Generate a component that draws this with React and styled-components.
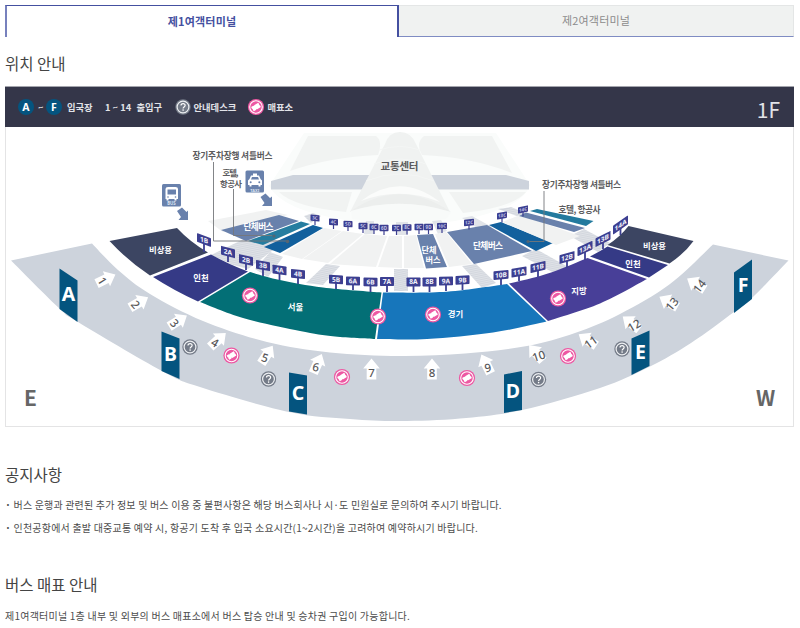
import React from "react";
import styled, { createGlobalStyle } from "styled-components";

const Global = createGlobalStyle`
  * { box-sizing: border-box; }
  body { margin: 0; background: #fff; }
  body, button { font-family: "Noto Sans CJK KR", "Noto Sans", sans-serif; }
`;

const Page = styled.main`
  width: 800px;
  height: 628px;
  overflow: hidden;
  padding: 5px 6px 0 5px;
  color: #4c4c4c;
`;

const TabList = styled.div`
  display: grid;
  grid-template-columns: 394px 1fr;
  height: 32px;
`;

const Tab = styled.button`
  margin: 0;
  padding: 0 0 2px;
  border-radius: 0;
  font-size: 11px;
  letter-spacing: 0.2px;
  font-weight: ${(p) => (p.$active ? 700 : 400)};
  color: ${(p) => (p.$active ? "#44509f" : "#8c8c8c")};
  background: ${(p) => (p.$active ? "#fff" : "#f0f2f1")};
  border-style: solid;
  border-color: ${(p) => (p.$active ? "#4450a0" : "#e4e6e6")};
  border-width: ${(p) => (p.$active ? "1px 2px 0" : "1px 1px 1px 0")};
  border-left-color: #7781bd;
  border-bottom-color: #7f8cc3;
`;

const Heading = styled.h2`
  margin: ${(p) => p.$top}px 0 0;
  height: 24px;
  line-height: 22px;
  font-size: 15.5px;
  font-weight: 400;
  color: #444;
`;

const MapCard = styled.section`
  margin-top: 10px;
  height: 341px;
  border: 1px solid #e4e4e5;
  border-top: 0;
`;

const Legend = styled.header`
  display: flex;
  align-items: center;
  height: 41px;
  margin: 0 -1px;
  padding: 0 14px 0 13px;
  background: #343649;
  border-top: 1px solid #a4a5ad;
  color: #e2e3e8;
  font-size: 9.3px;
`;

const LegendText = styled.span`
  margin: 0 ${(p) => p.$right || 0}px 0 ${(p) => p.$left || 0}px;
  width: ${(p) => p.$width}px;
  white-space: nowrap;
  font-weight: 700;
`;

const Floor = styled.span`
  margin-left: auto;
  font-size: 21px;
  line-height: 30px;
  padding-top: 3px;
  font-weight: 400;
`;

const Letter = styled.span`
  width: 16px;
  height: 16px;
  border-radius: 50%;
  background: #04547f;
  color: #fff;
  font: 700 10.5px/16px "Noto Sans", sans-serif;
  text-align: center;
`;

const IconSvg = styled.svg`
  width: 18px;
  height: 18px;
  flex: none;
`;

const MapSvg = styled.svg`
  display: block;
  width: 787px;
  height: 298px;
`;

const Notes = styled.ul`
  list-style: none;
  margin: 6px 0 0;
  padding: 0;
`;

const Note = styled.li`
  display: flex;
  height: 23px;
  align-items: center;
  font-size: 10px;
  letter-spacing: ${(p) => p.$spacing}px;
  white-space: nowrap;
  &::before { content: "·"; width: 8.5px; flex: none; font-weight: 700; }
`;

const Paragraph = styled.p`
  margin: 7px 0 0;
  height: 23px;
  line-height: 23px;
  font-size: 10px;
  letter-spacing: 0.23px;
  white-space: nowrap;
`;

/* Smooth path segment through a list of points. */
function curve(pts, start = "M") {
  let d = `${start}${pts[0][0]} ${pts[0][1]}`;
  for (let i = 0; i < pts.length - 1; i++) {
    const a = pts[i - 1] || pts[i];
    const b = pts[i];
    const c = pts[i + 1];
    const e = pts[i + 2] || c;
    d += `C${b[0] + (c[0] - a[0]) / 6} ${b[1] + (c[1] - a[1]) / 6} ${c[0] - (e[0] - b[0]) / 6} ${c[1] - (e[1] - b[1]) / 6} ${c[0]} ${c[1]}`;
  }
  return d;
}
const ribbon = (top, bottom) => curve(top) + curve(bottom, "L") + "Z";

const concourse = ribbon(
  [[92, 244.5], [118, 271], [150, 295], [203, 322], [267, 343], [330, 353.5], [400, 357], [465, 354.5], [527, 347], [575, 334], [620, 315], [670, 285], [713, 245.5]],
  [[788.5, 261.5], [752, 299], [734, 313], [691, 344], [650, 367.5], [600, 389], [522, 411], [460, 419.5], [400, 422], [350, 420], [289, 413], [200, 388], [162, 372], [78, 323], [60, 310], [11, 261.5]]
);

const zones = [
  { fill: "#3c4562", d: "M109.500 242L177 229Q190 243 208 253.500L150 276.500Q128 262 109.500 242Z" },
  { fill: "#353a86", d: "M153 278L211 255.500Q228 265 248 272.500L198 302.500Q173 291 153 278Z" },
  { fill: "#036f76", d: ribbon([[250, 273], [280, 281], [323, 288.5], [381.5, 293.5]], [[375, 340], [335, 337.5], [300, 332], [243, 319], [200, 303]]) },
  { fill: "#1776bb", d: ribbon([[383, 293.5], [427, 293.5], [460, 291.5], [507, 285]], [[546.5, 322.5], [493, 333.5], [427, 340], [377, 340]]) },
  { fill: "#483f98", d: ribbon([[509, 284.5], [540, 277], [563, 269], [587.5, 259]], [[647, 280], [600, 304.5], [548, 322]]) },
  { fill: "#353a86", d: "M590 257.5Q599 253 607.5 247.5L668 266L649 278.5Z" },
  { fill: "#3c4562", d: "M628.5 227L693.5 242Q685 254 669.5 264.5L607.5 246Q620 238 628.5 227Z" },
];

const gates = [
  ["A", 59.5, 269.5, 77.5, 281.5, 323, 310],
  ["B", 161.5, 332.5, 179.5, 339.5, 380, 372],
  ["C", 289, 373.5, 307, 376.5, 415.5, 412.5],
  ["D", 504, 375.5, 522, 372, 411, 414],
  ["E", 631.5, 339.5, 649.5, 331.5, 367, 376],
  ["F", 734, 273.5, 752, 260.5, 300, 314],
];

/* label, centre x, centre y, arrow angle, numeral angle */
const exits = [
  ["1", 106, 280, 64, 58], ["2", 139, 303.5, 60, 50], ["3", 178, 322, 58, 48], ["4", 218, 341, 48, 30],
  ["5", 267, 355.5, 33, 18], ["6", 317.5, 364.5, 24, 12], ["7", 371.5, 370, 0, 0], ["8", 432, 370, 0, 0],
  ["9", 486, 365, -26, -12], ["10", 536, 354, -41, -18], ["11", 587.5, 341, -57, -36], ["12", 631, 324, -52, -30],
  ["13", 668.5, 303, -60, -50], ["14", 696, 285, -58, -52],
];

const stops = [
  ["1B", 204, 241, 20, 253], ["2A", 228, 253, 15, 263], ["2B", 246, 261, 13, 271], ["3B", 263, 266.5, 10, 277],
  ["4A", 279.5, 271, 8, 281], ["4B", 298, 275, 5, 285], ["5B", 336, 280.5, 3, 290], ["6A", 353, 282, 1, 291],
  ["6B", 370.5, 283, 1, 293], ["7A", 387, 282.5, 0, 293], ["8A", 413.5, 283, 0, 293], ["8B", 429.5, 283, 0, 293],
  ["9A", 446, 282, -1, 292], ["9B", 462.5, 281, -3, 291], ["10B", 501, 276, -5, 286], ["11A", 519, 273, -9, 282],
  ["11B", 538, 268, -13, 278], ["12B", 567, 258.5, -16, 269], ["13A", 585, 249.5, -24, 261],
  ["13B", 603, 240, -27, 250], ["14A", 620.5, 226, -35, 236],
];

const innerStops = [
  ["3C", 315, 219, 5], ["4C", 333.5, 223, 3], ["5D", 348, 225, 2], ["5C", 363, 227, 1], ["6C", 374, 228, 0],
  ["6D", 384, 229, 0], ["7C", 396.5, 229, 0], ["8C", 407, 228.5, 0], ["9C", 419, 228, 0], ["9D", 428.5, 228, 0],
  ["10C", 442, 227, -2], ["12C", 469, 223.5, -6], ["13C", 502, 216.5, -10], ["14C", 523, 210.5, -12],
];

const zoneLabels = [
  ["비상용", 160.5, 251, 23], ["인천", 201, 279, 15.5], ["서울", 295.5, 307.5, 15.5], ["경기", 455.5, 315, 15.5],
  ["지방", 579, 291.5, 15.5], ["인천", 633, 264.5, 15.5], ["비상용", 654.5, 246.5, 23],
];

const tickets = [[250, 296.5], [378, 317.5], [433, 315.5], [558, 299.5], [231.5, 356.5], [342, 378], [467, 379], [568, 357]];
const desks = [[190, 348], [268.5, 380], [538.5, 380.5], [622, 350]];

function Desk({ x, y }) {
  return (
    <g transform={`translate(${x} ${y})`}>
      <circle r="7.7" fill="#747b88" />
      <circle r="5.9" fill="none" stroke="#eef0f3" strokeWidth="1.2" />
      <path d="M-2-1.4C-2-4.2 2.4-3.9 2.1-1.5 2 0 .1 0 .1 1.5" fill="none" stroke="#fff" strokeWidth="1.2" />
      <circle cx=".1" cy="3.1" r=".8" fill="#fff" />
    </g>
  );
}

function Ticket({ x, y }) {
  return (
    <g transform={`translate(${x} ${y})`}>
      <circle r="8.1" fill="#ed58a3" />
      <circle r="6.3" fill="none" stroke="#fff" strokeWidth="1.1" />
      <path transform="rotate(-32)" d="M-4.200-2.500H-1.600L-1.100-1.800-.600-2.500H4.200V-.7Q3.300 0 4.200 .7V2.500H-.600L-1.100 1.800-1.600 2.500H-4.200V.7Q-3.300 0-4.200-.7Z" fill="#fff" />
    </g>
  );
}

const MapText = styled.text`
  font-family: "Noto Sans CJK KR", sans-serif;
  font-size: ${(p) => p.$size || 8.7}px;
  font-weight: 700;
  fill: ${(p) => p.$fill || "#5b5b5d"};
  text-anchor: middle;
`;

const GateText = styled.text`
  font-family: "Noto Sans", sans-serif;
  font-size: ${(p) => p.$size}px;
  font-weight: ${(p) => p.$weight || 700};
  fill: ${(p) => p.$fill || "#fff"};
  text-anchor: middle;
`;

function Exit({ label, x, y, angle, turn }) {
  return (
    <g transform={`translate(${x} ${y}) rotate(${angle})`}>
      <path d="M0-10.500L8.300-.5H4.800V10.500H-4.800V-.5H-8.300Z" fill="#fff" />
      <g transform={`translate(0 4) rotate(${turn - angle})`}>
        <GateText $size={11.5} $weight={500} $fill="#58585a" y="4.200">{label}</GateText>
      </g>
    </g>
  );
}

function Stop({ label, x, y, angle, foot, small }) {
  const w = small ? (label.length > 2 ? 10 : 9) : label.length > 2 ? 15 : 14;
  const h = small ? 6.4 : 8.8;
  return (
    <g>
      <path d={`M${x} ${y}V${foot}`} stroke="#3c3f91" strokeWidth={small ? 1.2 : 1.8} />
      <g transform={`translate(${x} ${y}) skewY(${angle})`}>
        <rect x={-w / 2} y={-h / 2} width={w} height={h} rx=".7" fill="#3c3f91" />
        <GateText $size={small ? 4.5 : 6.6} $fill={small ? "#c1c3e5" : "#f2f2fa"} y={small ? 1.6 : 2.4}>{label}</GateText>
      </g>
    </g>
  );
}

function TransportCenter() {
  return (
    <g>
      <path d="M304 134H496L530 186Q522 211 455 222Q400 230 345 221Q282 211 269 187Z" fill="#fafcfb" />
      <path d="M308 137H376Q383 142 378 156Q330 158 290 172Z" fill="#f1f3f2" />
      <path d="M424 137H492L512 174Q471 158 422 156Q415 144 424 137Z" fill="#f1f3f2" />
      <path d="M279 193H352L346 213Q294 208 279 193Z" fill="#f1f3f2" />
      <path d="M449 193H526Q514 208 463 214Z" fill="#f1f3f2" />
      <path d="M271 182L293 176H506L529 182V190.500H271Z" fill="#cdd3dc" />
      <path d="M400 133Q389 133 385 145L350 213Q374 208 400 208Q426 208 450 213L416 145Q411 133 400 133Z" fill="#f0f2f1" />
      <path d="M366 182Q400 168 434 182M374 165Q400 155 426 165M379 151Q400 144 420 151" fill="none" stroke="#f4f6f5" strokeWidth="1" />
      <path d="M361 202Q400 172 440 203Q400 187 361 202Z" fill="#fbfcfb" />
      <path d="M351 212Q400 178 451 213Q400 197 351 212Z" fill="#eceeed" />
      <path d="M351 212Q400 197 451 213L446 220Q400 227 352 220Z" fill="#f8faf9" />
    </g>
  );
}

function Parking() {
  return (
    <g>
      <path d="M208 222L266 211 288 216 223 233Z" fill="#f1f2f2" />
      <path d="M211 256L248 238 285 242 248 270 233 266Z" fill="url(#hatch)" />
      <path d="M304 217L313 214 321 217 311 224Z M283 258L270 253 255 270 268 278Z" fill="url(#hatch)" />
      <path d="M326 265L340 267 323 286 306 284Z" fill="url(#hatch)" />
      <path d="M394 270H408V292H394Z" fill="url(#hatch)" />
      <path d="M462 267L476 265 496 284 482 289Z" fill="url(#hatch)" />
      <path d="M522 257L536 250 570 269 556 275Z" fill="url(#hatch)" />
      <path d="M570 237L584 230 610 244 598 253Z M498 210L511 208 528 215 522 219Z" fill="url(#hatch)" />
      <path d="M462 219L472 217 492 228 480 231Z M366 222H374V235H364ZM396 223H408V236H396ZM432 222L441 221 447 232 438 235Z" fill="#e1e4e9" />
      <path d="M221 231L279 216 299 222 246 242Z" fill="#6981ac" />
      <path d="M248 242L301 222.5 310 225 263 246Z" fill="#267da0" />
      <path d="M264 248L313 226 323 229 280 254Z" fill="#12609d" />
      <path d="M324 229L342 232 302 260 282 255Z" fill="#f1f2f2" />
      <path d="M343 232L363 235 328 264 303 260Z" fill="#f1f2f2" />
      <path d="M365 235L387 237 376 268 330 265Z" fill="#f1f2f2" />
      <path d="M389 237L402 237 402 269 378 268Z" fill="#f1f2f2" />
      <path d="M404 237L416 236 424 269 404 269Z" fill="#f1f2f2" />
      <path d="M417 236L433 235 447 268 426 269.5Z" fill="#6981ac" />
      <path d="M435 235L446 233 472 265 449 268Z" fill="#f1f2f2" />
      <path d="M447 233L487 226 532 252 474 265Z" fill="#6981ac" />
      <path d="M489 226L501 223 553 244 536 252Z" fill="#12609d" />
      <path d="M502 223L520 216 580 237 556 246Z" fill="#f1f2f2" />
      <path d="M519 217L526 213.5 585 229 574 233Z" fill="#6981ac" />
      <path d="M530 212L537 210 593.5 222 586 227Z" fill="#237a9e" />
    </g>
  );
}

function BusSign() {
  return (
    <g>
      <rect x="162" y="185" width="19" height="22.5" rx="1.5" fill="#6981ac" />
      <path d="M168 188H175.5Q178 188 178 190V200H176.5V201.5H174.5V200H168.5V201.5H166.5V200H165.5V190Q165.5 188 168 188ZM167.5 190.5V195.5H176V190.5Z" fill="#fff" fillRule="evenodd" />
      <circle cx="168" cy="198" r=".8" fill="#6981ac" />
      <circle cx="175.5" cy="198" r=".8" fill="#6981ac" />
      <GateText $size={4.3} $fill="#dbe4f0" x="171.5" y="206.3">BUS</GateText>
      <path d="M177 212L182 208.500 186.500 213 188 211.500V221H178.500L181 218Z" fill="#6981ac" />
    </g>
  );
}

function TaxiSign() {
  return (
    <g>
      <rect x="245.5" y="171.5" width="18.5" height="22" rx="1.5" fill="#6981ac" />
      <path d="M253 174.5H257V176.5H259L260.5 180 262 181.5V186H260.5V187.5H258.5V186H251.5V187.5H249.5V186H248V181.5L249.5 180 251 176.5H253ZM252 178L251 180.5H259L258 178Z" fill="#fff" fillRule="evenodd" />
      <circle cx="250.7" cy="183.3" r="1" fill="#6981ac" />
      <circle cx="259.3" cy="183.3" r="1" fill="#6981ac" />
      <GateText $size={4} $fill="#dbe4f0" x="254.8" y="192.5">TAXI</GateText>
      <path d="M260.500 198L265.500 194.500 270 199 272 197.500V207H262L264.500 204Z" fill="#6981ac" />
    </g>
  );
}

function TerminalMap() {
  return (
    <MapSvg viewBox="6 128 787 298" role="img" aria-label="1F">
      <defs>
        <pattern id="hatch" width="3" height="2" patternUnits="userSpaceOnUse" patternTransform="rotate(-12)">
          <rect width="3" height="2" fill="#dfe2e7" />
          <path d="M0 .5H3" stroke="#cbd0d8" strokeWidth=".6" />
        </pattern>
      </defs>
      <TransportCenter />
      <Parking />
      <path d={concourse} fill="#cdd3dc" />
      {zones.map((z, i) => <path key={i} d={z.d} fill={z.fill} />)}
      {innerStops.map(([label, x, y, angle]) => <Stop key={label} label={label} x={x} y={y} angle={angle} foot={y + 7} small />)}
      {stops.map(([label, x, y, angle, foot]) => <Stop key={label} label={label} x={x} y={y} angle={angle} foot={foot} />)}
      {gates.map(([label, x, yl, xr, yr, br, bl]) => (
        <g key={label}>
          <path d={`M${x} ${yl}L${xr} ${yr}V${br}L${x} ${bl}Z`} fill="#04547f" />
          <GateText $size={19.5} x={x + 9} y={(yl + yr + br + bl) / 4 + 6}>{label}</GateText>
        </g>
      ))}
      {exits.map(([label, x, y, angle, turn]) => <Exit key={label} label={label} x={x} y={y} angle={angle} turn={turn} />)}
      {tickets.map(([x, y]) => <Ticket key={x} x={x} y={y} />)}
      {desks.map(([x, y]) => <Desk key={x} x={x} y={y} />)}
      {zoneLabels.map(([label, x, y, w]) => (
        <MapText key={x} x={x} y={y + 3.2} $fill="#fff" $size={8.4} textLength={w}>{label}</MapText>
      ))}
      <path d="M213.5 163V242H287M233.5 190V236.500H272M544 192V242.500H528" fill="none" stroke="#75777b" strokeWidth=".9" />
      <circle cx="274" cy="237" r="1.6" fill="#556572" />
      <circle cx="287.500" cy="242.500" r="1.8" fill="#556572" />
      <circle cx="528" cy="242.500" r="1.6" fill="#556572" />
      <MapText x="232.500" y="159.500" textLength="80">장기주차장행 셔틀버스</MapText>
      <MapText x="230.500" y="176.500" textLength="16" $size={8.4}>호텔,</MapText>
      <MapText x="231" y="187.500" textLength="22" $size={8.4}>항공사</MapText>
      <MapText x="581.500" y="189" textLength="79">장기주차장행 셔틀버스</MapText>
      <MapText x="579.500" y="214" textLength="42">호텔, 항공사</MapText>
      <MapText x="399.500" y="171" textLength="38" $size={10.5}>교통센터</MapText>
      <MapText x="258.500" y="231" textLength="30" $fill="#fff">단체버스</MapText>
      <MapText x="488" y="250" textLength="30" $fill="#fff">단체버스</MapText>
      <MapText x="429" y="254" textLength="15" $size={8.2} $fill="#fff">단체</MapText>
      <MapText x="433" y="263.500" textLength="15" $size={8.2} $fill="#fff">버스</MapText>
      <BusSign />
      <TaxiSign />
      <MapText x="30.500" y="406.500" $size={21} $fill="#666">E</MapText>
      <MapText x="765.500" y="406.500" $size={21} $fill="#666">W</MapText>
    </MapSvg>
  );
}

export default function App() {
  return (
    <>
      <Global />
      <Page>
        <TabList role="tablist">
          <Tab role="tab" aria-selected="true" $active>제1여객터미널</Tab>
          <Tab role="tab" aria-selected="false">제2여객터미널</Tab>
        </TabList>
        <Heading $top={15}>위치 안내</Heading>
        <MapCard>
          <Legend>
            <Letter>A</Letter>
            <LegendText $left={4} $right={2} $width={6}>~</LegendText>
            <Letter>F</Letter>
            <LegendText $left={5} $width={38}>입국장</LegendText>
            <LegendText $width={31.5}>1 ~ 14</LegendText>
            <LegendText $width={37}>출입구</LegendText>
            <IconSvg viewBox="-9 -9 18 18"><Desk x={0} y={0} /></IconSvg>
            <LegendText $left={2} $width={53}>안내데스크</LegendText>
            <IconSvg viewBox="-9 -9 18 18"><Ticket x={0} y={0} /></IconSvg>
            <LegendText $left={3} $width={30}>매표소</LegendText>
            <Floor>1F</Floor>
          </Legend>
          <TerminalMap />
        </MapCard>
        <Heading $top={36}>공지사항</Heading>
        <Notes>
          <Note $spacing={0.18}>버스 운행과 관련된 추가 정보 및 버스 이용 중 불편사항은 해당 버스회사나 시·도 민원실로 문의하여 주시기 바랍니다.</Note>
          <Note $spacing={0.21}>인천공항에서 출발 대중교통 예약 시, 항공기 도착 후 입국 소요시간(1~2시간)을 고려하여 예약하시기 바랍니다.</Note>
        </Notes>
        <Heading $top={34}>버스 매표 안내</Heading>
        <Paragraph>제1여객터미널 1층 내부 및 외부의 버스 매표소에서 버스 탑승 안내 및 승차권 구입이 가능합니다.</Paragraph>
      </Page>
    </>
  );
}
